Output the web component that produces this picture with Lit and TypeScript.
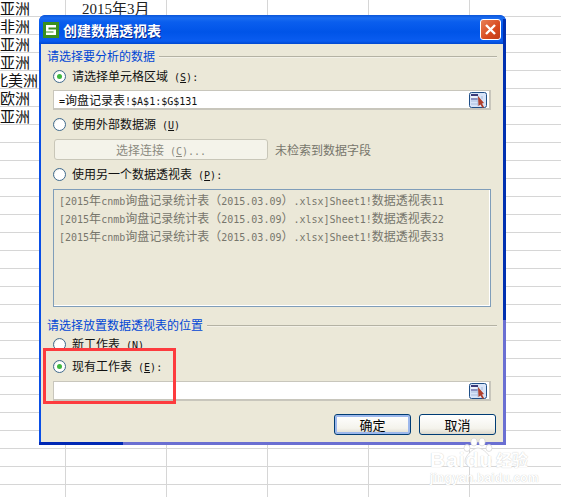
import { LitElement, html, css, svg } from "lit";
import { customElement } from "lit/decorators.js";

const L = (t: string) => html`<span class="l">${t}</span>`;
const K = (k: string, tail = "") => html`<span class="l"> (<u>${k}</u>)${tail}</span>`;

@customElement("app-root")
export class AppRoot extends LitElement {
  static styles = css`
    :host { display: block; width: 561px; height: 497px; position: relative; overflow: hidden; background: #fff;
      font-family: "Noto Sans CJK SC", sans-serif; }
    .sheet { position: absolute; inset: 0; }
    .vlines { position: absolute; inset: 0; display: grid; grid-template-columns: 66px 101px 101px 101px 101px 1fr; }
    .vlines i { border-right: 1px solid #d6d6d6; }
    .hlines { position: absolute; inset: 0; display: flex; flex-direction: column; padding-top: 16px; }
    .hlines i { flex: none; height: 18px; box-sizing: border-box; border-top: 1px solid #d6d6d6; }
    .col1 { position: absolute; left: 0; top: 0; width: 65px; display: flex; flex-direction: column; font: 15px/18px "Liberation Serif", "Noto Sans CJK SC", serif; color: #111; white-space: nowrap; }
    .col1 span { height: 18px; }
    .clip { margin-left: -7px; }
    .month { position: absolute; left: 82px; top: 0; font: 15px/18px "Liberation Serif", "Noto Sans CJK SC", serif; color: #222; }

    .dialog { position: absolute; left: 39px; top: 15px; width: 467px; height: 430px; box-sizing: border-box; border-radius: 6px 6px 0 0;
      background: #0a4fe6;
      display: flex; flex-direction: column; padding: 0 3px 3px 2px; overflow: hidden; }
    .edge-r { position: absolute; right: 0; top: 305px; bottom: 0; width: 3px; background: #6a6fd2; }
    .edge-b { position: absolute; left: 84px; right: 0; bottom: 0; height: 3px; background: #6a6fd2; }
    .edge-bl { position: absolute; left: 0; width: 84px; bottom: 0; height: 3px; background: #0028b4; }
    .edge-rt { position: absolute; right: 0; top: 4px; height: 301px; width: 3px; background: #0030b0; }
    .title { flex: none; height: 29px; margin: 0 -3px 0 -2px; padding: 0 5px 0 4px; display: flex; align-items: center; gap: 4px; box-sizing: border-box;
      background: linear-gradient(180deg, #0a55d8 0, #1a6cf0 3px, #0a5eee 7px, #0054e8 17px, #0a5cf0 26px, #0048d0 29px); border-radius: 6px 6px 0 0; }
    .logo { width: 16px; height: 16px; flex: none; }
    .title b { flex: 1; font-size: 14px; line-height: 16px; font-weight: 700; color: #fff; text-shadow: 1px 1px 0 #0a2a90; }
    .close { width: 21px; height: 21px; flex: none; box-sizing: border-box; border: 1px solid #fff; border-radius: 3px; background: linear-gradient(135deg, #e88058, #d84a20 60%, #c03c18); display: flex; align-items: center; justify-content: center; }
    .body { flex: 1; background: #ebe8d8; position: relative; padding: 5px 6px 0 6px; display: flex; flex-direction: column; font-size: 12px; color: #111; min-height: 0; }
    .l { font: 10px "DejaVu Sans Mono", monospace; white-space: pre; }
    .l u { text-underline-offset: 1px; }
    .legend { display: flex; align-items: center; gap: 4px; height: 14px; color: #0046d5; line-height: 14px; white-space: nowrap; }
    .legend::after { content: ""; flex: 1; height: 1px; background: #b4b2a4; box-shadow: 0 1px 0 #fff6; }
    .row { display: flex; align-items: center; gap: 6px; height: 16px; margin-left: 6px; white-space: nowrap; line-height: 16px; }
    .radio { width: 13px; height: 13px; box-sizing: border-box; border-radius: 50%; border: 1px solid #3f6a8e; background: radial-gradient(circle at 60% 60%, #fff 55%, #dcd9cc); display: flex; align-items: center; justify-content: center; flex: none; }
    .radio i { width: 5px; height: 5px; border-radius: 50%; background: #3fb83f; }
    .r1 { margin-top: 5px; }
    .field { height: 20px; width: 438px; box-sizing: border-box; margin-left: 6px; border: 1px solid #c8c6bc; border-width: 1px 2px 2px 1px; background: #fff; display: flex; align-items: center; justify-content: space-between; padding: 0 2px 0 5px; white-space: nowrap; }
    .f1 { margin-top: 6px; }
    .pick { width: 18px; height: 16px; flex: none; display: block; }
    .r2 { margin-top: 6px; }
    .conn { display: flex; align-items: center; gap: 7px; margin: 7px 0 0 7px; height: 21px; color: #77766c; white-space: nowrap; }
    .btn0 { width: 214px; height: 21px; box-sizing: border-box; border: 1px solid #c8c6b8; border-radius: 3px; background: #f4f3ea; text-align: center; line-height: 19px; color: #8b8a80; }
    .r3 { margin-top: 6px; }
    .list { margin: 7px 0 0 6px; width: 438px; height: 118px; box-sizing: border-box; border: 1px solid #7f9db9; box-shadow: inset -1px -1px 0 #fff; padding: 1px 5px; color: #77766c; display: flex; flex-direction: column; white-space: nowrap; }
    .list div { height: 18px; line-height: 18px; }
    .legend2 { margin-top: 11px; }
    .r4 { margin-top: 4px; }
    .r5 { margin-top: 6px; }
    .f2 { margin-top: 7px; }
    .foot { display: flex; justify-content: flex-end; gap: 8px; margin: 13px 1px 0 0; }
    .btn { width: 77px; height: 21px; box-sizing: border-box; border: 1px solid #003c74; border-radius: 3px; background: linear-gradient(180deg, #fff, #f4f3ec 70%, #dcd8cc); text-align: center; line-height: 19px; color: #000; font-size: 13px; }
    .btn.def { box-shadow: inset 0 0 0 2px #9db8ec; }

    .mark { position: absolute; left: 43px; top: 348px; width: 133px; height: 56px; box-sizing: border-box; border: 3px solid #fd3b3e; pointer-events: none; }
    .wm { position: absolute; left: 430px; top: 437px; width: 105px; height: 48px; pointer-events: none; }
    .wm svg { position: absolute; left: 31px; top: 0; }
    .wm span { position: absolute; color: #fff; text-shadow: 0 0 1px #bbb; white-space: nowrap; }
    .wm .b { left: 0; top: 12px; font: 700 21px/22px "Liberation Sans", sans-serif; letter-spacing: 1px; }
    .wm .j { left: 66px; top: 13px; font: 700 16px/18px "Noto Sans CJK SC", sans-serif; }
    .wm .w { left: 0; top: 34px; font: 700 12px/14px "Liberation Sans", sans-serif; letter-spacing: .2px; }
  `;

  private radio(on = false) {
    return html`<span class="radio">${on ? html`<i></i>` : ""}</span>`;
  }
  private pick() {
    return svg`<svg class="pick" viewBox="0 0 18 16">
      <rect x=".5" y=".5" width="17" height="15" rx="2" fill="#d8e4f8" stroke="#1f4f88"/>
      <rect x="2" y="2" width="7" height="2" fill="#3a3a78"/>
      <rect x="2" y="4" width="7" height="2" fill="#eef2fa"/>
      <rect x="2" y="6" width="7" height="2" fill="#8a90c0"/>
      <path d="M2 9h7M2 12h7M9 4v10M13 4v3" stroke="#a8bcdc" fill="none"/>
      <path d="M9 4l6 7-2 .5 2 3.5-1.5 1-2-3.5-2 1.5z" fill="#b0402c"/>
    </svg>`;
  }

  render() {
    const row = (s: string) => html`<div>${L("[2015")}年${L("cnmb")}询盘记录统计表（${L("2015.03.09")}）${L(".xlsx]Sheet1!")}数据透视表${L(s)}</div>`;
    return html`
      <div class="sheet">
        <div class="hlines">${Array.from({ length: 27 }, () => html`<i></i>`)}</div>
        <div class="vlines"><i></i><i></i><i></i><i></i><i></i></div>
        <div class="col1">
          <span>亚洲</span><span>非洲</span><span>亚洲</span><span>亚洲</span><span class="clip">北美洲</span><span>欧洲</span><span>亚洲</span>
        </div>
        <div class="month">2015年3月</div>
      </div>

      <div class="dialog">
        <i class="edge-rt"></i><i class="edge-r"></i><i class="edge-b"></i><i class="edge-bl"></i>
        <div class="title">
          <svg class="logo" viewBox="0 0 16 16"><rect width="16" height="16" fill="#3a8f1e"/><path d="M3 3h10v2.4H5.5v2H13V13H3v-2.4h7.5v-1.2H3z" fill="#fff"/></svg>
          <b>创建数据透视表</b>
          <span class="close"><svg width="13" height="13" viewBox="0 0 13 13"><path d="M2 2l9 9M11 2l-9 9" stroke="#fff" stroke-width="2.4"/></svg></span>
        </div>
        <div class="body">
          <div class="legend">请选择要分析的数据</div>
          <div class="row r1">${this.radio(true)}<span>请选择单元格区域${K("S", ":")}</span></div>
          <div class="field f1"><span>${L("=")}询盘记录表${L("!$A$1:$G$131")}</span>${this.pick()}</div>
          <div class="row r2">${this.radio()}<span>使用外部数据源${K("U")}</span></div>
          <div class="conn"><div class="btn0">选择连接${K("C", "...")}</div><span>未检索到数据字段</span></div>
          <div class="row r3">${this.radio()}<span>使用另一个数据透视表${K("P", ":")}</span></div>
          <div class="list">${row("11")}${row("22")}${row("33")}</div>
          <div class="legend legend2">请选择放置数据透视表的位置</div>
          <div class="row r4">${this.radio()}<span>新工作表${K("N")}</span></div>
          <div class="row r5">${this.radio(true)}<span>现有工作表${K("E", ":")}</span></div>
          <div class="field f2"><span></span>${this.pick()}</div>
          <div class="foot"><div class="btn def">确定</div><div class="btn">取消</div></div>
        </div>
      </div>

      <div class="mark"></div>
      <div class="wm">
        <svg width="34" height="32" viewBox="0 0 34 32"><g fill="#fff" stroke="#ccc" stroke-width=".6"><ellipse cx="6" cy="11" rx="3" ry="3.5"/><ellipse cx="13" cy="5" rx="3.2" ry="4"/><ellipse cx="21" cy="5" rx="3.2" ry="4"/><ellipse cx="28" cy="11" rx="3" ry="3.5"/><path d="M17 11c5 0 13 8 13 13 0 5-5 6-13 6S4 29 4 24c0-5 8-13 13-13z"/></g></svg>
        <span class="b">Baidu</span>
        <span class="j">经验</span>
        <span class="w">jingyan.baidu.com</span>
      </div>
    `;
  }
}
